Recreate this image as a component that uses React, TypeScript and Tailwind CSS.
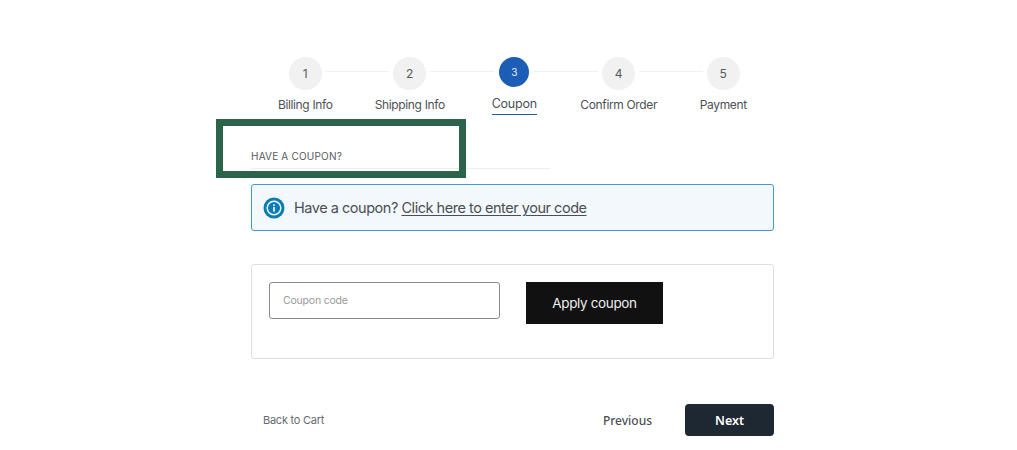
const steps = [
  { n: "1", label: "Billing Info" },
  { n: "2", label: "Shipping Info" },
  { n: "3", label: "Coupon", active: true },
  { n: "4", label: "Confirm Order" },
  { n: "5", label: "Payment" },
];

export default function App() {
  return (
    <div className="relative h-[450px] w-[1017px] overflow-hidden bg-white font-['Inter',sans-serif] text-[#4c5156]">
      <div className="ml-[251px] w-[523px] pt-[57px]">
        <div className="ml-[2px] flex h-[58px] w-[522.5px]">
          {steps.map((s, i) => (
            <div key={s.n} className="relative flex w-[104.5px] flex-col items-center">
              {i < 4 && <div className="absolute left-[72px] top-[14px] h-px w-[64px] bg-[#f0f0f0]" />}
              {s.active ? (
                <>
                  <div className="flex h-[30px] w-[30px] items-center justify-center rounded-full bg-[#1c5db5] text-[10px] text-[#e6edf7]">
                    {s.n}
                  </div>
                  <div className="mt-[2px] h-[26px] border-b-[1.5px] border-[#1c5db5] text-[12.5px] leading-[30px] tracking-[-0.25px]">
                    {s.label}
                  </div>
                </>
              ) : (
                <>
                  <div className="flex h-[33px] w-[33px] items-center justify-center rounded-full bg-[#f1f1f1] text-[12px] text-[#555a60]">
                    {s.n}
                  </div>
                  <div className="mt-[6px] whitespace-nowrap text-[12px] leading-[18px] tracking-[-0.35px]">
                    {s.label}
                  </div>
                </>
              )}
            </div>
          ))}
        </div>

        <div className="mt-[34px] h-[20px] w-[299px] border-b border-[#eeeeee] text-[10px] leading-[14px] tracking-[0.2px] text-[#555a60]">
          HAVE A COUPON?
        </div>

        <div className="mt-[15px] flex h-[47px] items-center gap-[9px] rounded-[3px] border border-[#3f9bcb] bg-[#f3f8fd] pl-[11px] text-[14.5px] tracking-[-0.47px] text-[#4a4f55]">
          <svg width="22" height="22" viewBox="0 0 22 22" className="shrink-0">
            <circle cx="11" cy="11" r="10.5" fill="#0a7cb8" />
            <circle cx="11" cy="11" r="6.8" fill="none" stroke="#fff" strokeWidth="1.4" />
            <rect x="10.2" y="10" width="1.6" height="4.6" fill="#fff" />
            <rect x="10.2" y="7.4" width="1.6" height="1.6" fill="#fff" />
          </svg>
          <span className="pt-[1px]">
            Have a coupon? <span className="underline underline-offset-2">Click here to enter your code</span>
          </span>
        </div>

        <div className="mt-[33px] flex h-[95px] items-start gap-[26px] rounded-[3px] border border-[#dedede] pl-[17px] pt-[17px]">
          <input
            readOnly
            placeholder="Coupon code"
            className="h-[37px] w-[231px] rounded-[3px] border border-[#8a8a8a] pl-[13px] text-[10.5px] tracking-[-0.2px] outline-none placeholder:text-[#9a9a9a]"
          />
          <button className="h-[42px] w-[137px] bg-[#111111] text-[13.5px] tracking-[-0.35px] text-[#eeeeee]">Apply coupon</button>
        </div>

        <div className="mt-[45px] flex h-[32px] items-center">
          <span className="ml-[12px] text-[11px] tracking-[-0.25px] text-[#666b70]">Back to Cart</span>
          <span className="ml-auto pt-[1px] font-['Noto_Sans',sans-serif] text-[12px] font-medium text-[#4a4f55]">Previous</span>
          <button className="ml-[33px] h-[32px] w-[89px] rounded-[4px] bg-[#1e2833] pt-[2px] font-['Noto_Sans',sans-serif] text-[12.5px] font-semibold text-white">
            Next
          </button>
        </div>
      </div>

      <div className="absolute left-[216px] top-[119px] h-[59px] w-[250px] border-[7px] border-[#2c634b]" />
    </div>
  );
}
